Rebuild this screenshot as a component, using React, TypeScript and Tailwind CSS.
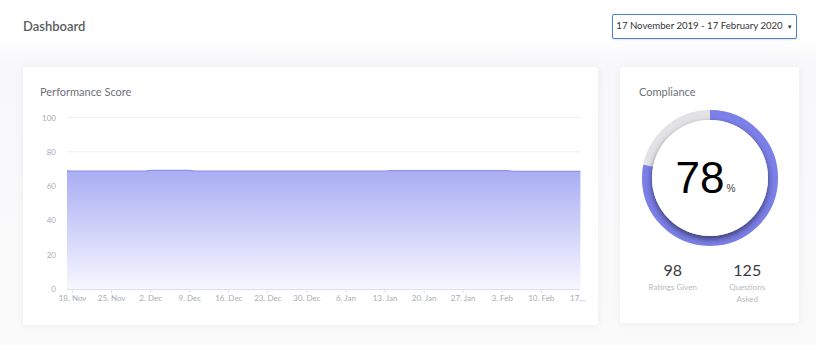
import React from "react";

const Y_TICKS = [0, 20, 40, 60, 80, 100];
const X_LABELS = [
  "18. Nov", "25. Nov", "2. Dec", "9. Dec", "16. Dec", "23. Dec", "30. Dec",
  "6. Jan", "13. Jan", "20. Jan", "27. Jan", "3. Feb", "10. Feb",
];

// chart coords (svg-local): plot spans x 44..557.5, y 182 (0) .. 10.5 (100)
const X0 = 44;
const DAY = 5.58;
const yOf = (v: number) => 182 - v * 1.715;

// one value per day, Nov 17 -> Feb 17
const VALUES = Array.from({ length: 93 }, (_, d) => {
  if (d < 2) return 68.9 - d * 0.2;
  if (d >= 15 && d <= 22) return 69.2;
  if (d >= 58 && d <= 79) return 69.0;
  if (d > 79) return 68.6;
  return 68.7;
});

function PerformanceChart() {
  const pts = VALUES.map((v, i) => `${(X0 + i * DAY).toFixed(1)},${yOf(v).toFixed(1)}`);
  const last = X0 + (VALUES.length - 1) * DAY;
  const area = `M${X0},182 L${pts.join(" L")} L${last},182 Z`;
  const line = `M${pts.join(" L")}`;
  return (
    <svg width="575" height="218" className="block">
      <defs>
        <linearGradient id="perf" x1="0" y1="0" x2="0" y2="1">
          <stop offset="0%" stopColor="#a9adf4" />
          <stop offset="100%" stopColor="#f7f7fe" />
        </linearGradient>
      </defs>
      {Y_TICKS.map((t) => (
        <g key={t}>
          {t > 0 && <line x1={X0} x2={557.5} y1={yOf(t)} y2={yOf(t)} stroke="#efeff2" strokeWidth="1" />}
          <text x={33} y={yOf(t) + 3} textAnchor="end" fontSize="8" fill="#a9abb3">{t}</text>
        </g>
      ))}
      <path d={area} fill="url(#perf)" />
      <path d={line} fill="none" stroke="#8f93ea" strokeWidth="1.2" />
      <line x1={X0} x2={557.5} y1={182.5} y2={182.5} stroke="#dde0ea" strokeWidth="1" />
      {X_LABELS.map((l, i) => {
        const x = X0 + (i * 7 + 1) * DAY;
        return (
          <g key={l}>
            <line x1={x} x2={x} y1={182} y2={186} stroke="#dde0ea" />
            <text x={x} y={194} textAnchor="middle" fontSize="8" fill="#a9abb3">{l}</text>
          </g>
        );
      })}
      <text x={547} y={194} fontSize="8" fill="#a9abb3">17…</text>
    </svg>
  );
}

function ComplianceGauge({ value }: { value: number }) {
  const r = 63;
  const c = 2 * Math.PI * r;
  return (
    <div className="relative w-[140px] h-[140px]">
      <svg width="140" height="140" className="block">
        <defs>
          <filter id="inner" x="-20%" y="-20%" width="140%" height="150%">
            <feDropShadow dx="0" dy="3" stdDeviation="3" floodColor="#000" floodOpacity="0.55" />
          </filter>
        </defs>
        <circle cx="70" cy="70" r={r} fill="none" stroke="#e3e3e5" strokeWidth="10" />
        <circle
          cx="70"
          cy="70"
          r={r}
          fill="none"
          stroke="#7b7fe8"
          strokeWidth="10"
          strokeDasharray={`${(c * value) / 100} ${c}`}
          transform="rotate(-90 70 70)"
        />
        <circle cx="70" cy="70" r="58" fill="#fff" filter="url(#inner)" />
      </svg>
      <div className="absolute inset-0 flex items-center justify-center pl-[2px]">
        <span className="text-[44px] leading-none text-black font-['Liberation_Sans',sans-serif] -ml-[10px]">
          {value}
        </span>
        <span className="text-[10px] text-[#444] mt-[20px] ml-[2px] font-['Liberation_Sans',sans-serif]">%</span>
      </div>
    </div>
  );
}

export default function App() {
  return (
    <div className="w-[816px] h-[351px] bg-white overflow-hidden font-['Lato',sans-serif]">
      {/* Header */}
      <div className="flex items-center justify-between pl-[23px] pr-[19px] pt-[14px]">
        <h1 className="text-[13px] font-semibold text-[#5b5d63]">Dashboard</h1>
        <button className="w-[185px] h-[25px] border border-[#4d7fd6] rounded-[2px] bg-white flex items-center justify-center gap-[4px] whitespace-nowrap text-[9.6px] text-[#333] shadow-[0_1px_2px_rgba(0,0,0,0.1)]">
          17 November 2019 - 17 February 2020
          <span className="text-[6px] text-[#333]">▼</span>
        </button>
      </div>

      {/* Cards */}
      <div className="flex gap-[22px] px-[23px] pt-[28px] pb-[20px] bg-[linear-gradient(to_bottom,#ffffff_0px,#f8f8fa_22px,#fafafb_100%)]">
        <div className="w-[575px] h-[258px] bg-white rounded-[3px] shadow-[0_1px_10px_rgba(40,40,80,0.06)]">
          <div className="h-[40px] pl-[17px] pt-[18px] text-[11px] text-[#6f7178] leading-[14px]">
            Performance Score
          </div>
          <PerformanceChart />
        </div>

        <div className="w-[179px] h-[256px] bg-white rounded-[3px] shadow-[0_1px_10px_rgba(40,40,80,0.06)] flex flex-col items-center">
          <div className="self-stretch pl-[19px] pt-[18px] text-[11px] text-[#6f7178] leading-[14px]">
            Compliance
          </div>
          <div className="mt-[9px]">
            <ComplianceGauge value={78} />
          </div>
          <div className="flex self-stretch mt-[12px] pl-[16px] pr-[14px]">
            <div className="w-[74px] flex flex-col items-center">
              <span className="text-[16px] leading-[20px] text-[#3a3b3f]">98</span>
              <span className="text-[8px] leading-[12px] text-[#b8b9be] mt-[1px]">Ratings Given</span>
            </div>
            <div className="w-[76px] flex flex-col items-center">
              <span className="text-[16px] leading-[20px] text-[#3a3b3f]">125</span>
              <span className="text-[8px] leading-[12px] text-[#b8b9be] mt-[1px] text-center w-[40px]">
                Questions Asked
              </span>
            </div>
          </div>
        </div>
      </div>
    </div>
  );
}
